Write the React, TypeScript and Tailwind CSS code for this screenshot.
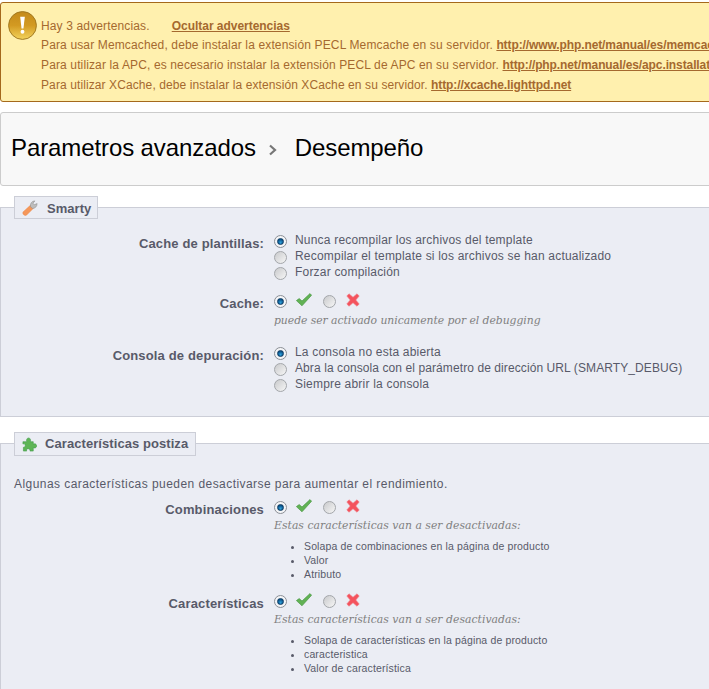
const sans = "font-['Liberation_Sans',Arial,sans-serif]";

function Radio({ checked }: { checked?: boolean }) {
  if (checked) {
    return (
      <span className="flex h-[13px] w-[13px] shrink-0 items-center justify-center rounded-full border border-[#8b8f96] bg-[#f4f5f7]">
        <span className="h-[7px] w-[7px] rounded-full border border-[#0b3a63] bg-[radial-gradient(circle_at_50%_70%,#2f9fd8,#0d5c94_60%,#0a3c68)]" />
      </span>
    );
  }
  return (
    <span className="block h-[13px] w-[13px] shrink-0 rounded-full border border-[#a3a6aa] bg-[linear-gradient(135deg,#c9cacc,#f6f6f6)]" />
  );
}

function CheckIcon() {
  return (
    <svg width="16" height="14" viewBox="0 0 16 14" className="block shrink-0">
      <path d="M0.4 7.6 L3.2 5.6 L6 8 L14 0.6 L15.6 2.2 L6 12.8 Z" fill="#62b254" stroke="#4a9a46" strokeWidth="0.7" strokeLinejoin="round" />
    </svg>
  );
}

function CrossIcon() {
  return (
    <svg width="14" height="14" viewBox="0 0 14 14" className="block shrink-0">
      <path d="M3 0.8 L7 4.2 L11 0.8 L13.2 3 L9.8 7 L13.2 11 L11 13.2 L7 9.8 L3 13.2 L0.8 11 L4.2 7 L0.8 3 Z" fill="#f4535d" stroke="#f08088" strokeWidth="0.6" strokeLinejoin="round" />
    </svg>
  );
}

function WarnIcon() {
  return (
    <svg width="29" height="29" viewBox="0 0 30 30" className="block shrink-0">
      <defs>
        <linearGradient id="warn" x1="0" y1="0" x2="0" y2="1">
          <stop offset="0" stopColor="#c48a1a" />
          <stop offset="0.5" stopColor="#d39a22" />
          <stop offset="1" stopColor="#f3d35c" />
        </linearGradient>
      </defs>
      <circle cx="15" cy="15" r="14.4" fill="url(#warn)" stroke="#a0771f" strokeWidth="1" />
      <path d="M12.6 6 H17.4 L16 18 H14 Z" fill="#fff" />
      <circle cx="15" cy="21.5" r="2" fill="#fff" />
    </svg>
  );
}

function WrenchIcon() {
  return (
    <svg width="16" height="16" viewBox="0 0 18 18" className="block shrink-0">
      <path d="M1.2 13.4 L9.4 6 L12.6 9.6 L5.2 17 C3.2 18.2 0 16 1.2 13.4 Z" fill="#f5975a" stroke="#ea8240" strokeWidth="0.5" />
      <path d="M9.5 7.5 C9 4 11 1 14.5 1 L12.4 3.6 L13.8 5.4 L17 4 C17 7.5 14.4 9.8 11.6 9.4 Z" fill="#bdbdbd" stroke="#8a8a8a" strokeWidth="0.6" />
    </svg>
  );
}

function PuzzleIcon() {
  return (
    <svg width="15" height="15" viewBox="0 0 16 16" className="block shrink-0">
      <path d="M1 5 H5 C4.5 3.5 5 1 7 1 C9 1 9.5 3.5 9 5 H12 V7.5 C14 7 15.5 7.5 15.5 9.5 C15.5 11.5 14 12 12 11.5 V15 H8.5 C9 13.5 8 12.5 6.5 12.5 C5 12.5 4.5 13.5 5 15 H1.5 V11 C2.5 11 3.5 10.5 3.5 9 C3.5 7.5 2.5 7 1 7.5 Z" fill="#5fb557" stroke="#3f9a48" strokeWidth="0.6" />
    </svg>
  );
}

function Legend({ icon, title, cls, textCls }: { icon: React.ReactNode; title: string; cls: string; textCls: string }) {
  return (
    <div className={`ml-[13px] mt-[-12px] flex w-fit items-center border border-[#ccced7] bg-[#ebedf4] pl-[7px] text-[13px] font-bold text-[#585a69] ${cls}`}>
      {icon}
      <span className={textCls}>{title}</span>
    </div>
  );
}

function RadioOption({ checked, label, cls = "tracking-[0.2px]" }: { checked?: boolean; label: string; cls?: string }) {
  return (
    <div className={`flex h-4 items-center gap-[8px] text-[12px] text-[#585a69] ${cls}`}>
      <span className="mt-[1px]"><Radio checked={checked} /></span>
      <span className="mt-[-2px]">{label}</span>
    </div>
  );
}

function Toggle() {
  return (
    <div className="flex h-4 items-center">
      <span className="mt-[1px]"><Radio checked /></span>
      <span className="ml-[9px] mt-[-3px]"><CheckIcon /></span>
      <span className="ml-[11px] mt-[1px]"><Radio /></span>
      <span className="ml-[10px] mt-[-3px]"><CrossIcon /></span>
    </div>
  );
}

function Hint({ children, cls }: { children: string; cls: string }) {
  return (
    <p className={`font-['DejaVu_Serif',serif] text-[10.8px] italic leading-4 text-[#7f7f7f] ${cls}`}>{children}</p>
  );
}

function FieldLabel({ children }: { children: string }) {
  return (
    <div className="w-[263px] pt-[2px] text-right text-[13px] font-bold leading-[18px] tracking-[0.15px] text-[#585a69]">{children}</div>
  );
}

function FeatureRow({ label, items }: { label: string; items: string[] }) {
  return (
    <div className="flex">
      <FieldLabel>{label}</FieldLabel>
      <div className="ml-[10px]">
        <Toggle />
        <div className="mt-[3px]"><Hint cls="tracking-[0.04px]">Estas características van a ser desactivadas:</Hint></div>
        <ul className="ml-[30px] mt-[5px] list-disc text-[10.5px] leading-[14px] tracking-[0.14px] text-[#585a69] marker:text-[#585a69]">
          {items.map((item) => (
            <li key={item}>{item}</li>
          ))}
        </ul>
      </div>
    </div>
  );
}

export default function App() {
  return (
    <div className={`h-[689px] w-[709px] overflow-hidden bg-white pt-[2px] ${sans}`}>
      {/* warnings */}
      <div className="relative h-[100px] w-[760px] rounded-[3px] border border-[#a5691c] bg-[#fff0ae] pl-[40px] pt-[12px] text-[12px] leading-5 tracking-[0.14px] text-[#a5692f] whitespace-nowrap">
        <span className="absolute left-[7px] top-[8px]"><WarnIcon /></span>
        <div className="mt-[1px] mb-[-1px]">
          Hay 3 advertencias.
          <a className="ml-[22px] font-bold tracking-[-0.03px] underline">Ocultar advertencias</a>
        </div>
        <div>
          Para usar Memcached, debe instalar la extensión PECL Memcache en su servidor.{" "}
          <a className="font-bold tracking-[-0.1px] underline">http://www.php.net/manual/es/memcache.installation.php</a>
        </div>
        <div className="tracking-[0.13px]">
          Para utilizar la APC, es necesario instalar la extensión PECL de APC en su servidor.{" "}
          <a className="font-bold tracking-[-0.1px] underline">http://php.net/manual/es/apc.installation.php</a>
        </div>
        <div className="tracking-[0.1px]">
          Para utilizar XCache, debe instalar la extensión XCache en su servidor.{" "}
          <a className="font-bold tracking-[-0.1px] underline">http://xcache.lighttpd.net</a>
        </div>
      </div>

      {/* title */}
      <div className="mt-[10px] flex h-[74px] w-[760px] items-center rounded-[3px] border border-[#cccccc] bg-[#f8f8f8] pb-[2px] pl-[10px] text-[24px] tracking-[-0.1px] text-black whitespace-nowrap">
        <span>Parametros avanzados</span>
        <svg width="10" height="12" viewBox="0 0 10 12" className="ml-[12px] mr-[17px] mt-[3px]">
          <path d="M2 1.5 L7 6 L2 10.5" fill="none" stroke="#777" strokeWidth="2.2" />
        </svg>
        <span>Desempeño</span>
      </div>

      {/* smarty */}
      <div className="mt-[21px] h-[210px] w-[760px] border border-[#ccced7] bg-[#ebedf4]">
        <Legend icon={<WrenchIcon />} title="Smarty" cls="h-[23px] gap-[9px] pr-[6px]" textCls="pt-[2px] tracking-[0.03px]" />
        <div className="mt-[14px] flex">
          <FieldLabel>Cache de plantillas:</FieldLabel>
          <div className="ml-[10px]">
            <RadioOption checked label="Nunca recompilar los archivos del template" />
            <RadioOption label="Recompilar el template si los archivos se han actualizado" />
            <RadioOption label="Forzar compilación" />
          </div>
        </div>
        <div className="mt-[12px] flex">
          <FieldLabel>Cache:</FieldLabel>
          <div className="ml-[10px]">
            <Toggle />
            <div className="mt-[4px]"><Hint cls="tracking-[-0.04px]">puede ser activado unicamente por el debugging</Hint></div>
          </div>
        </div>
        <div className="mt-[16px] flex">
          <FieldLabel>Consola de depuración:</FieldLabel>
          <div className="ml-[10px]">
            <RadioOption checked label="La consola no esta abierta" />
            <RadioOption label="Abra la consola con el parámetro de dirección URL (SMARTY_DEBUG)" cls="tracking-[0.09px]" />
            <RadioOption label="Siempre abrir la consola" />
          </div>
        </div>
      </div>

      {/* features */}
      <div className="mt-[26px] w-[760px] border border-[#ccced7] bg-[#ebedf4] pb-10">
        <Legend icon={<PuzzleIcon />} title="Características postiza" cls="h-[24px] gap-[8px] pr-[7px]" textCls="tracking-[0.07px]" />
        <p className="ml-[13px] mt-[20px] text-[12px] leading-4 tracking-[0.44px] text-[#585a69]">
          Algunas características pueden desactivarse para aumentar el rendimiento.
        </p>
        <div className="mt-[7px]">
          <FeatureRow label="Combinaciones" items={["Solapa de combinaciones en la página de producto", "Valor", "Atributo"]} />
        </div>
        <div className="mt-[12px]">
          <FeatureRow label="Características" items={["Solapa de características en la página de producto", "caracteristica", "Valor de característica"]} />
        </div>
      </div>
    </div>
  );
}
